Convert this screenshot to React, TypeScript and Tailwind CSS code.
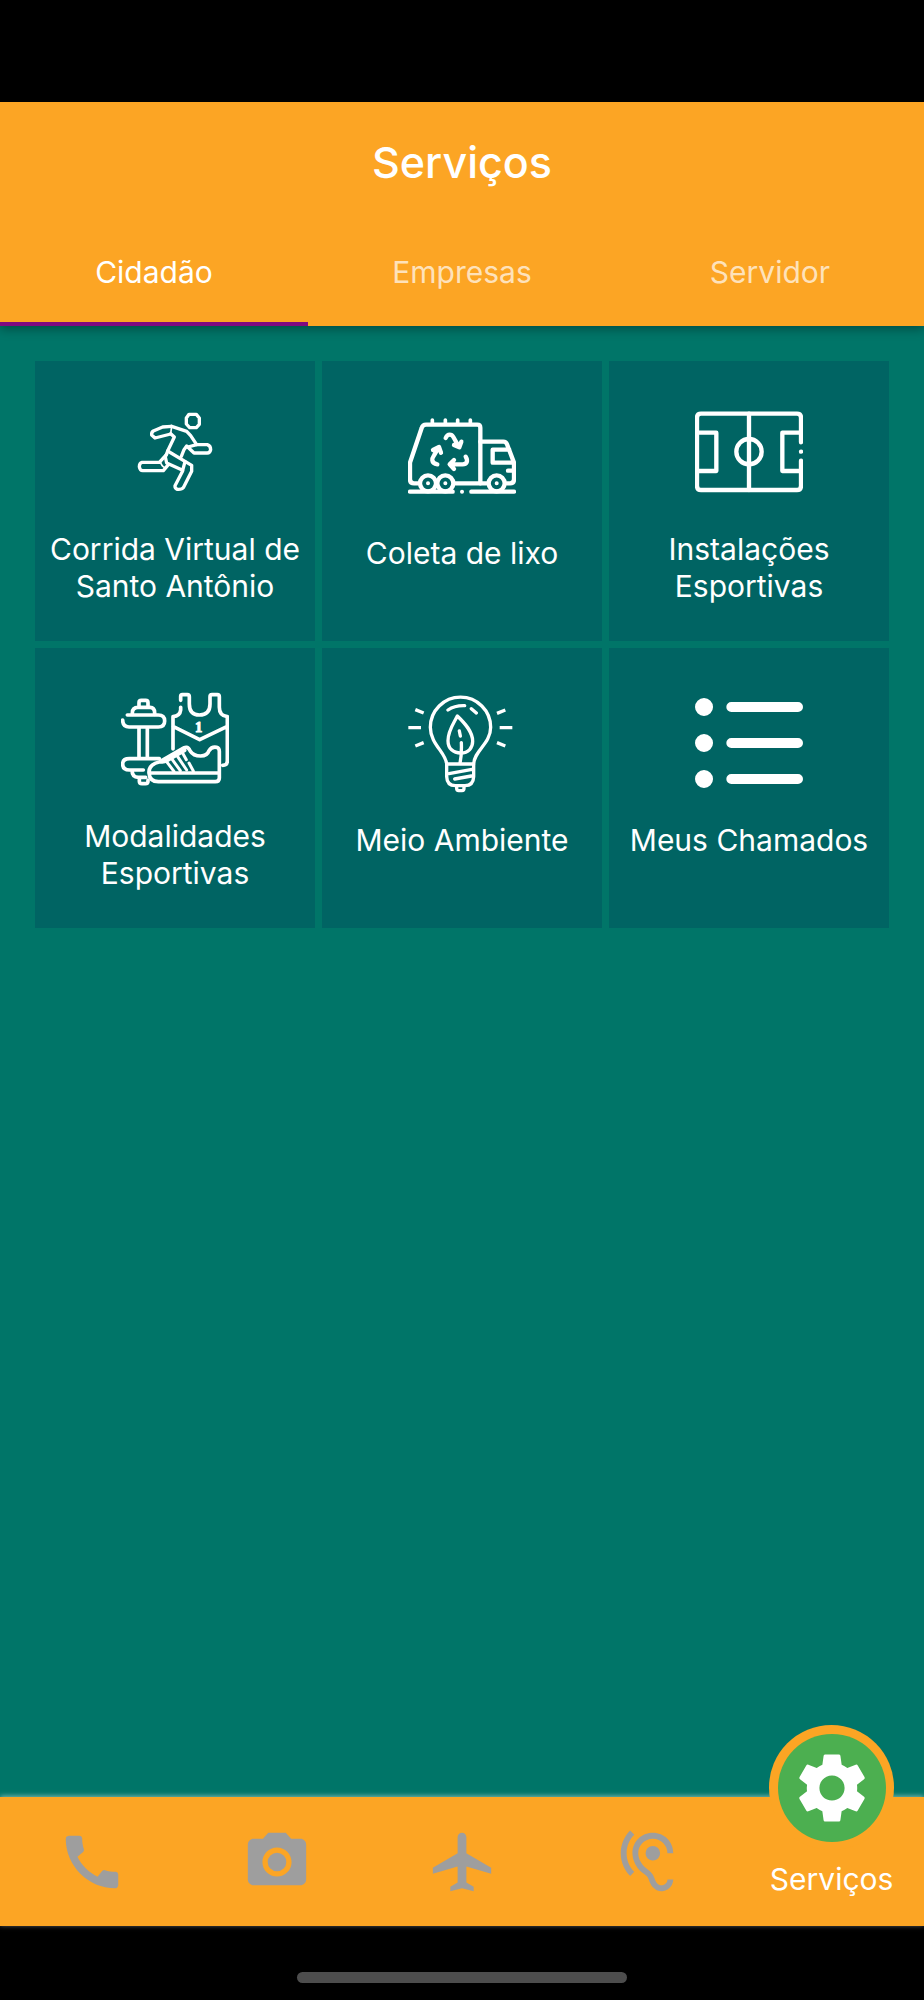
import { useState } from 'react';
import type { ReactNode } from 'react';
import { MdCall, MdHearing, MdPhotoCamera, MdSettings } from 'react-icons/md';

interface Servico {
  titulo: string;
  icone: ReactNode;
}

interface IconeProps {
  viewBox: string;
  espessura?: number;
  children: ReactNode;
}

function Icone({ viewBox, espessura = 12, children }: IconeProps) {
  return (
    <svg viewBox={viewBox} className="size-27 shrink-0" fill="none" stroke="currentColor" strokeWidth={espessura} strokeLinecap="round" strokeLinejoin="round" aria-hidden="true">
      {children}
    </svg>
  );
}

function CorridaIcon() {
  return (
    <Icone viewBox="3 23 324 324" espessura={10}>
      <path d="M207 72h22l9 11v19l-9 10h-20l-10-11V83z" />
      <path d="M155 108l-27 2-28 12q-6 4-5 12l10 9 47-12" />
      <path d="M155 108l-3 22" strokeWidth={5} />
      <path d="M155 108l45 15 12 13 18 27h32q10 3 10 15-2 10-10 10h-40l-22-21-8 11-8 20" />
      <path d="M204 170l26-7" />
      <path d="M152 130l11 10-20 42 72 43v18l-25 49q-4 6-18 5-8-3-7-11l23-44" />
      <path d="M143 182l-7 18 4 18 48 22 7-26" />
      <path d="M140 192l-22 24H66q-8 2-8 13 2 12 10 12h62l15-18" />
      <path d="M121 214q4 14 14 18" strokeWidth={5} />
    </Icone>
  );
}

function ColetaIcon() {
  return (
    <Icone viewBox="54 5 324 324" espessura={13}>
      <path d="M86 249H72q-12 0-12-12v-50L95 83q3-10 13-10h154q9 0 9 9v167" />
      <path d="M127 59v12M166 59v12M203 59v12M241 59v12" strokeWidth={11} />
      <path d="M271 124h69q8 0 11 8l21 55v50q0 12-12 12h-10M358 148h-50v39h62M370 211h-16M194 249h98" />
      <circle cx="114" cy="249" r="24" />
      <circle cx="166" cy="249" r="24" />
      <circle cx="320" cy="249" r="24" />
      <path d="M114 249h.1M166 249h.1M320 249h.1M216 274h.1" strokeWidth={12} />
      <path d="M60 274h128M244 274h128" />
      <path d="M167 113q4-10 12-10 7 0 11 7l17 30M192 134l16 7 6-17" />
      <path d="M142 192q-14-2-15-12-1-6 5-15l14-24M129 149l18-9 6 17" />
      <path d="M227 169q6 10 3 17-3 6-12 6h-38M192 179l-13 13 13 14" />
    </Icone>
  );
}

function InstalacoesIcon() {
  return (
    <Icone viewBox="45 -7 324 324" espessura={13}>
      <path d="M363 126V52q0-12-12-12H63q-12 0-12 12v204q0 13 12 13h288q12 0 12-13v-75M363 154h.1" />
      <path d="M207 40v229M51 97h58v115H51M363 97h-56v115h56" />
      <circle cx="207" cy="154" r="38" />
    </Icone>
  );
}

function ModalidadesIcon() {
  return (
    <Icone viewBox="33 13 324 324" espessura={11}>
      <path d="M87 75v-9q0-7 7-7h13q7 0 7 7v9M67 101v-4q0-17 17-17h36q14 0 14 17v4" />
      <path d="M52 103h93q19 0 19 18t-19 18H57q-19 0-19-21M87 139v89M112 139v89" />
      <path d="M148 234H58q-20 0-20 16 0 18 20 18h42M66 268q0 22 19 22h22M88 292v10q0 7 8 7h10q8 0 8-7v-4" />
      <path d="M212 59V47q0-5 5-5h15q6 0 6 6v22q0 33 30 33 32 0 32-33V48q0-6 6-6h16q6 0 6 6v32q0 26 24 28v132q0 14-14 14M212 80v8q-2 18-23 20v97M189 137l80 40 83-40" />
      <text x="266" y="154" textAnchor="middle" fill="currentColor" stroke="currentColor" strokeWidth={3} fontSize="44" fontWeight="bold" fontFamily="'Liberation Serif', serif">1</text>
      <path d="M117 277q-2-26 33-34l65-38q18-12 25 5 10 16 32 16 20 0 25-16 8-13 23-10 8 2 8 12v80q0 11-12 11H145q-26 0-28-26zM117 277h211" />
      <path d="M152 243q8 3 20-4l52-30" />
      <path d="M172 246l20 26M187 237l24 33M203 228l27 40M219 219l10 18M237 247l13 24" strokeWidth={9} />
    </Icone>
  );
}

function AmbienteIcon() {
  return (
    <Icone viewBox="24 27 324 324" espessura={10}>
      <path d="M140 252c-2-34-49-60-49-110a90 90 0 0 1 181 0c0 50-50 70-51 110" />
      <path d="M140 252h81v38q-1 27-26 27h-29q-25 0-26-27zM147 281l69-13M164 297l50-9" />
      <path d="M170 319v6q0 7 6 7h10q6 0 6-7v-6" />
      <path d="M172 108c-12 24-28 44-28 74 0 24 16 37 38 37 24 0 36-16 36-35 0-29-23-54-46-76z" />
      <path d="M180 250c4-20 5-40 4-62M178 153l3 15M144 90q20-14 50-13M214 86l15 13" />
      <path d="M46 89l25 10M25 143h38M46 198l25-10M316 90l-25 10M299 143h38M316 198l-25-10" strokeLinecap="butt" />
    </Icone>
  );
}

function ChamadosIcon() {
  return (
    <Icone viewBox="45 27 324 324" espessura={30}>
      <path d="M154 81h200M154 189h200M154 297h200" />
      <path d="M72 81h.1M72 189h.1M72 297h.1" strokeWidth={54} />
    </Icone>
  );
}

function AviaoIcon({ className }: { className?: string }) {
  return (
    <svg viewBox="0 0 24 24" fill="currentColor" className={className} aria-hidden="true">
      <path d="M22 16v-2l-8.5-5V3.5c0-.83-.67-1.5-1.5-1.5s-1.5.67-1.5 1.5V9L2 14v2l8.5-2.5V19L8 20.5V22l4-1 4 1v-1.5L13.5 19v-5.5L22 16z" />
    </svg>
  );
}

const ABAS = ['Cidadão', 'Empresas', 'Servidor'];

const SERVICOS: Servico[] = [
  { titulo: 'Corrida Virtual de Santo Antônio', icone: <CorridaIcon /> },
  { titulo: 'Coleta de lixo', icone: <ColetaIcon /> },
  { titulo: 'Instalações Esportivas', icone: <InstalacoesIcon /> },
  { titulo: 'Modalidades Esportivas', icone: <ModalidadesIcon /> },
  { titulo: 'Meio Ambiente', icone: <AmbienteIcon /> },
  { titulo: 'Meus Chamados', icone: <ChamadosIcon /> },
];

const NAVEGACAO = [
  { nome: 'Telefones', Icon: MdCall },
  { nome: 'Fotos', Icon: MdPhotoCamera },
  { nome: 'Turismo', Icon: AviaoIcon },
  { nome: 'Ouvidoria', Icon: MdHearing },
];

export default function App() {
  const [aba, setAba] = useState(ABAS[0]);

  return (
    <div className="flex min-h-screen flex-col bg-black pt-[102px] font-[Inter,sans-serif] text-white">
      <header className="z-10 bg-[#fca524] shadow-[0_3px_10px_rgba(0,0,0,0.35)]">
        <h1 className="flex h-30 items-center justify-center text-[43px] font-medium">Serviços</h1>
        <div role="tablist" className="grid grid-cols-3">
          {ABAS.map((nome) => (
            <button
              key={nome}
              type="button"
              role="tab"
              aria-selected={aba === nome}
              onClick={() => setAba(nome)}
              className={`h-26 border-b-4 text-[30px] ${aba === nome ? 'border-[#800a80]' : 'border-transparent text-white/70'}`}
            >
              {nome}
            </button>
          ))}
        </div>
      </header>

      <main className="flex-1 bg-[#007568] px-[35px] pt-[35px]">
        <div className="grid grid-cols-3 gap-[7px]">
          {SERVICOS.map((s) => (
            <button key={s.titulo} type="button" className="flex aspect-square flex-col items-center justify-center gap-[25px] bg-[#006463] px-2">
              {s.icone}
              <span className="min-h-[66px] text-[30px] leading-[37px]">{s.titulo}</span>
            </button>
          ))}
        </div>
      </main>

      {/* Bottom navigation */}
      <nav className="relative grid h-[129px] grid-cols-5 bg-[#fca524] shadow-[0_-1px_5px_rgba(255,255,255,0.5)]">
        {NAVEGACAO.map(({ nome, Icon }) => (
          <button key={nome} type="button" aria-label={nome} className="flex items-center justify-center text-[#9e9e9e]">
            <Icon className="size-[70px]" />
          </button>
        ))}
        <button type="button" className="relative flex flex-col items-center justify-end pb-[29px] text-[30px] leading-9">
          <span className="absolute -top-18 flex size-[125px] items-center justify-center rounded-full bg-[#fca524]">
            <span className="flex size-27 items-center justify-center rounded-full bg-[#4caf50]">
              <MdSettings className="size-21" />
            </span>
          </span>
          Serviços
        </button>
      </nav>

      <footer className="flex h-[74px] justify-center bg-black pt-[46px]">
        <div className="h-[11px] w-[330px] rounded-full bg-[#4d4d4d]" />
      </footer>
    </div>
  );
}
